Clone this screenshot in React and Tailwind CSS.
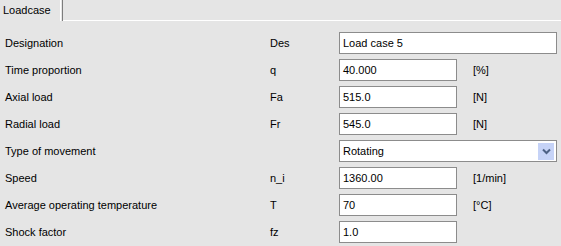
import React from 'react';

const rows = [
  { label: 'Designation', sym: 'Des', value: 'Load case 5', wide: true },
  { label: 'Time proportion', sym: 'q', value: '40.000', unit: '[%]' },
  { label: 'Axial load', sym: 'Fa', value: '515.0', unit: '[N]' },
  { label: 'Radial load', sym: 'Fr', value: '545.0', unit: '[N]' },
  { label: 'Type of movement', sym: '', value: 'Rotating', select: true },
  { label: 'Speed', sym: 'n_i', value: '1360.00', unit: '[1/min]' },
  { label: 'Average operating temperature', sym: 'T', value: '70', unit: '[°C]' },
  { label: 'Shock factor', sym: 'fz', value: '1.0' },
];

const Field = ({ row }) => {
  if (row.select) {
    return (
      <div className="col-span-2 w-[218px] h-[22px] bg-white border border-[#8c8c8c] flex items-center justify-between pl-[3px] pr-[2px]">
        <span>{row.value}</span>
        <span className="w-[16px] h-[17px] bg-[#c6d3f7] flex items-center justify-center">
          <svg width="9" height="7" viewBox="0 0 9 7">
            <path d="M1 1.5 L4.5 5 L8 1.5" fill="none" stroke="#4d6185" strokeWidth="2" />
          </svg>
        </span>
      </div>
    );
  }
  if (row.wide) {
    return (
      <div className="col-span-2 w-[218px] h-[22px] bg-white border border-[#8c8c8c] flex items-center px-[3px]">
        {row.value}
      </div>
    );
  }
  return (
    <>
      <div className="w-[118px] h-[22px] bg-white border border-[#8c8c8c] flex items-center px-[3px]">
        {row.value}
      </div>
      <div>{row.unit}</div>
    </>
  );
};

const App = () => {
  return (
    <div className="w-[561px] h-[246px] bg-[#e5e5e5] text-black text-[11px] overflow-hidden" style={{ fontFamily: '"Liberation Sans", Arial, sans-serif' }}>
      <div className="flex h-[21px]">
        <div className="w-[63px] h-[21px] border-r border-r-[#7d7d7d] flex items-center pl-[3px] relative">
          <span className="absolute right-[1px] top-0 h-full w-px bg-white" />
          Loadcase
        </div>
        <div className="flex-1 border-b border-b-white" />
      </div>
      <div className="grid grid-cols-[265px_69px_134px_1fr] gap-y-[5px] items-center pl-[5px] pt-[11px]">
        {rows.map((row) => (
          <React.Fragment key={row.label}>
            <div>{row.label}</div>
            <div>{row.sym}</div>
            <Field row={row} />
          </React.Fragment>
        ))}
      </div>
    </div>
  );
};

export default App;
